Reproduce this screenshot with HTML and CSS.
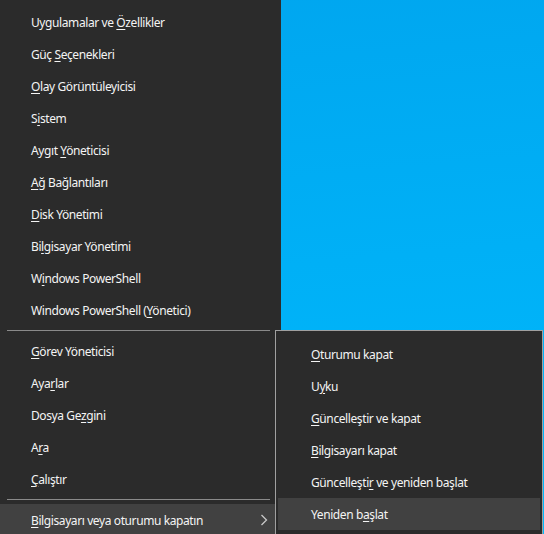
FILE: index.html
```html
<!DOCTYPE html>
<html lang="tr">
<head>
<meta charset="utf-8">
<title>Win+X</title>
<link rel="stylesheet" href="styles.css">
</head>
<body>
<div class="screen">
  <nav class="menu">
    <div class="item"><span>Uygulamalar ve <u>Ö</u>zellikler</span></div>
    <div class="item"><span>Güç <u>S</u>eçenekleri</span></div>
    <div class="item"><span><u>O</u>lay Görüntüleyicisi</span></div>
    <div class="item"><span>S<u>i</u>stem</span></div>
    <div class="item"><span>Aygıt <u>Y</u>öneticisi</span></div>
    <div class="item"><span><u>A</u>ğ Bağlantıları</span></div>
    <div class="item"><span><u>D</u>isk Yönetimi</span></div>
    <div class="item"><span>Bi<u>l</u>gisayar Yönetimi</span></div>
    <div class="item"><span>W<u>i</u>ndows PowerShell</span></div>
    <div class="item"><span>Windows PowerShell (<u>Y</u>önetici)</span></div>
    <div class="sep"></div>
    <div class="item"><span><u>G</u>örev Yöneticisi</span></div>
    <div class="item"><span>Aya<u>r</u>lar</span></div>
    <div class="item"><span>Dosya Ge<u>z</u>gini</span></div>
    <div class="item"><span>A<u>r</u>a</span></div>
    <div class="item"><span><u>Ç</u>alıştır</span></div>
    <div class="sep"></div>
    <div class="item item-active"><span><u>B</u>ilgisayarı veya oturumu kapatın</span>
      <svg class="chev" width="8" height="12" viewBox="0 0 8 12"><path d="M1.5 1 L6.5 6 L1.5 11" fill="none" stroke="#c8c8c8" stroke-width="1.3"/></svg>
    </div>
  </nav>
  <div class="submenu">
    <div class="item"><span><u>O</u>turumu kapat</span></div>
    <div class="item"><span>U<u>y</u>ku</span></div>
    <div class="item"><span><u>G</u>üncelleştir ve kapat</span></div>
    <div class="item"><span><u>B</u>ilgisayarı kapat</span></div>
    <div class="item"><span>Güncelleşti<u>r</u> ve yeniden başlat</span></div>
    <div class="item item-active"><span>Yeniden b<u>a</u>şlat</span></div>
  </div>
</div>
</body>
</html>
```
FILE: styles.css
```css
html, body {
  margin: 0;
  padding: 0;
}
body {
  width: 544px;
  height: 534px;
  overflow: hidden;
  font-family: "Noto Sans", "Open Sans", sans-serif;
  font-size: 12px;
  letter-spacing: -0.4px;
  color: #f4f4f4;
}
.screen {
  position: relative;
  width: 544px;
  height: 534px;
  background: linear-gradient(175deg, #00a6ef 0%, #00b0f6 50%, #00b9fc 100%);
}
.menu {
  width: 281px;
  height: 534px;
  background: #2b2b2b;
  padding-top: 6px;
  box-sizing: border-box;
  display: flex;
  flex-direction: column;
}
.item {
  height: 32px;
  display: flex;
  align-items: center;
  justify-content: space-between;
  padding-left: 31px;
  padding-right: 13px;
  white-space: nowrap;
  flex-shrink: 0;
}
.item u {
  text-decoration-thickness: 1px;
  text-underline-offset: 2px;
}
.item-active {
  background: #414141;
}
.sep {
  height: 1px;
  background: #8a8a8a;
  margin: 4px 11px 4px 7px;
  flex-shrink: 0;
}
.menu .sep:first-of-type {
  margin-top: 5px;
}
.chev {
  display: block;
}
.submenu {
  position: absolute;
  left: 275px;
  top: 330px;
  width: 268px;
  height: 210px;
  box-sizing: border-box;
  background: #2b2b2b;
  border: 1px solid #a0a0a0;
  padding: 7px 2px 0 2px;
  display: flex;
  flex-direction: column;
}
.submenu .item {
  padding-left: 33px;
}
```
